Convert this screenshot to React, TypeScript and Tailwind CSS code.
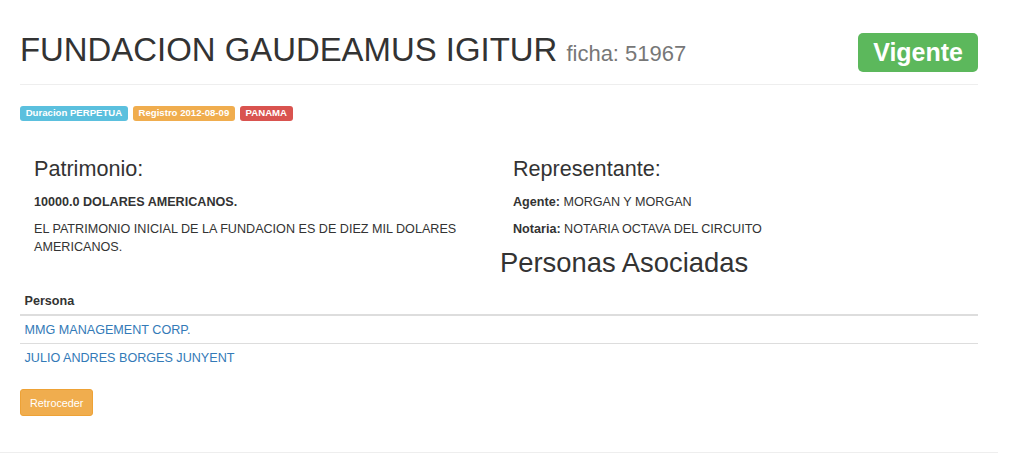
import React from 'react';

const labels = [
  { text: 'Duracion PERPETUA', bg: 'bg-[#5bc0de]' },
  { text: 'Registro 2012-08-09', bg: 'bg-[#f0ad4e]' },
  { text: 'PANAMA', bg: 'bg-[#d9534f]' },
];

const personas = ['MMG MANAGEMENT CORP.', 'JULIO ANDRES BORGES JUNYENT'];

export default function App() {
  return (
    <div className="w-[1024px] h-[460px] overflow-hidden bg-white text-[#333] text-[12.6px] leading-[18px] font-['Liberation_Sans',Arial,sans-serif]">
      <div className="w-[998px] px-[20px]">
        {/* Header */}
        <div className="pt-[32px] flex items-start justify-between">
          <h1 className="h-[35.6px] text-[32.9px] leading-[35.6px] font-normal whitespace-nowrap">
            FUNDACION GAUDEAMUS IGITUR{' '}
            <small className="text-[22px] leading-none text-[#777]">ficha: 51967</small>
          </h1>
          <span className="mt-[1px] h-[39px] px-[15px] flex items-center rounded-[5px] bg-[#5cb85c] text-white font-bold text-[25px] leading-none">
            Vigente
          </span>
        </div>
        <div className="mt-[12px] border-t border-[#eee]" />

        {/* Labels */}
        <div className="mt-[21px] flex gap-[5px]">
          {labels.map((l) => (
            <span
              key={l.text}
              className={`${l.bg} text-white font-bold text-[9.6px] leading-none pt-[2px] pb-[3px] px-[5.7px] rounded-[3px]`}
            >
              {l.text}
            </span>
          ))}
        </div>

        {/* Info columns */}
        <div className="mt-[36px] grid grid-cols-2">
          <div className="px-[14px]">
            <h3 className="text-[21.6px] leading-[23.8px]">Patrimonio:</h3>
            <p className="mt-[12.5px] font-bold">10000.0 DOLARES AMERICANOS.</p>
            <p className="mt-[9px]">EL PATRIMONIO INICIAL DE LA FUNDACION ES DE DIEZ MIL DOLARES AMERICANOS.</p>
          </div>
          <div className="px-[14px]">
            <h3 className="text-[21.6px] leading-[23.8px]">Representante:</h3>
            <p className="mt-[12.5px]">
              <b>Agente:</b> MORGAN Y MORGAN
            </p>
            <p className="mt-[9px]">
              <b>Notaria:</b> NOTARIA OCTAVA DEL CIRCUITO
            </p>
            <h2 className="mt-[10px] -ml-[13px] text-[27.4px] leading-[29.7px]">Personas Asociadas</h2>
          </div>
        </div>

        {/* Table */}
        <table className="mt-[9.5px] w-full border-collapse text-left">
          <thead>
            <tr>
              <th className="px-[4.5px] py-[4.5px] font-bold border-b-2 border-[#ddd]">Persona</th>
            </tr>
          </thead>
          <tbody>
            {personas.map((p, i) => (
              <tr key={p}>
                <td className={`px-[4.5px] py-[4.5px] ${i > 0 ? 'border-t border-[#ddd]' : ''}`}>
                  <a className="text-[#337ab7]">{p}</a>
                </td>
              </tr>
            ))}
          </tbody>
        </table>

        <button className="mt-[18px] bg-[#f0ad4e] border border-[#eea236] text-white text-[10.8px] leading-[16.2px] px-[9px] py-[4.5px] rounded-[3px]">
          Retroceder
        </button>
      </div>

      <div className="mt-[36px] w-[998px] border-t border-[#eee]" />
    </div>
  );
}
